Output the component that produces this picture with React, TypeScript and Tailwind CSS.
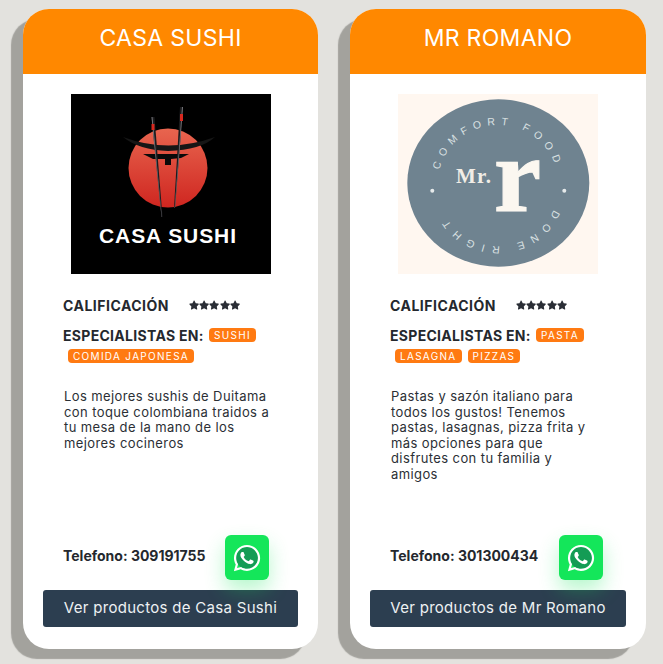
import { FaStar, FaWhatsapp } from 'react-icons/fa';

const restaurantes = [
  {
    nombre: 'CASA SUSHI',
    boton: 'Ver productos de Casa Sushi',
    telefono: '309191755',
    descripcion: 'Los mejores sushis de Duitama con toque colombiana traidos a tu mesa de la mano de los mejores cocineros',
    tags: ['SUSHI', 'COMIDA JAPONESA'],
    logo: 'sushi',
    ancho: 'w-[295px]',
    telAncho: 'w-[142px]',
  },
  {
    nombre: 'MR ROMANO',
    boton: 'Ver productos de Mr Romano',
    telefono: '301300434',
    descripcion: 'Pastas y sazón italiano para todos los gustos! Tenemos pastas, lasagnas, pizza frita y más opciones para que disfrutes con tu familia y amigos',
    tags: ['PASTA', 'LASAGNA', 'PIZZAS'],
    logo: 'romano',
    ancho: 'w-[296px]',
    telAncho: 'w-[149px]',
  },
];

const LogoSushi = () => (
  <svg viewBox="0 0 200 180" className="block w-[200px] h-[180px]">
    <defs>
      <linearGradient id="sol" x1="0" y1="0" x2="0" y2="1">
        <stop offset="0" stopColor="#e8654f" />
        <stop offset="1" stopColor="#cf2620" />
      </linearGradient>
    </defs>
    <rect width="200" height="180" fill="#000" />
    <circle cx="97" cy="74" r="39.5" fill="url(#sol)" />
    <path d="M52 43 Q97 60 144 43 Q130 56 97 57 Q68 56 52 43Z" fill="#161616" />
    <path d="M72 60 L118 60 L110 64 L100 65 L100 71 L94 71 L94 65 L82 65Z" fill="#0a0a0a" />
    <path d="M80.5 23 L83.5 23 L91.5 123 L90.5 123Z" fill="#1c1c1e" />
    <path d="M109 13 L112 13 L104 114 L103 114Z" fill="#1c1c1e" />
    <path d="M80.5 23 L81.5 23 L90.8 123 L90.5 123Z" fill="#77777c" />
    <path d="M111 13 L112 13 L104 114 L103.7 114Z" fill="#77777c" />
    <rect x="80.5" y="30" width="3" height="6" fill="#d8281f" />
    <rect x="109" y="20" width="3" height="7" fill="#d8281f" />
    <text x="28" y="149" textLength="137" lengthAdjust="spacing" fill="#fff" fontFamily="'Liberation Sans', sans-serif" fontWeight="700" fontSize="21">CASA SUSHI</text>
  </svg>
);

const LogoRomano = () => (
  <svg viewBox="0 0 200 180" className="block w-[200px] h-[180px]">
    <defs>
      <path id="arcoArriba" d="M40 89 A60 58 0 0 1 160 89" />
      <path id="arcoAbajo" d="M160 94 A60 58 0 0 1 40 94" />
    </defs>
    <rect width="200" height="180" fill="#fff7f0" />
    <ellipse cx="100.3" cy="89" rx="91" ry="83.7" fill="#6f8390" />
    <text fill="#d9e0e2" fontFamily="'Liberation Sans', sans-serif" fontSize="10.5" letterSpacing="6">
      <textPath href="#arcoArriba" startOffset="7%">COMFORT FOOD</textPath>
    </text>
    <text fill="#d9e0e2" fontFamily="'Liberation Sans', sans-serif" fontSize="10.5" letterSpacing="7">
      <textPath href="#arcoAbajo" startOffset="12%">DONE RIGHT</textPath>
    </text>
    <circle cx="34.3" cy="96.7" r="2" fill="#e6eaeb" />
    <circle cx="166.3" cy="96.7" r="2" fill="#e6eaeb" />
    <text x="58" y="88.5" fill="#f1ede6" fontFamily="'Liberation Serif', serif" fontWeight="700" fontSize="21" textLength="35">Mr.</text>
    <text x="96" y="116.5" fill="#fbf7f0" stroke="#fbf7f0" strokeWidth="1.2" fontFamily="'Liberation Serif', serif" fontWeight="700" fontSize="106">r</text>
  </svg>
);

const App: React.FC = () => {
  return (
    <div className="h-[664px] w-[663px] overflow-hidden bg-[#e3e2de] font-['Inter',sans-serif] pt-[9px] pl-[23px] flex gap-8">
      {restaurantes.map((r) => (
        <div
          key={r.nombre}
          className={`${r.ancho} h-[640px] bg-white rounded-[26px] overflow-hidden flex flex-col shadow-[-12px_10px_1px_#a3a29d]`}
        >
          <div className="h-[65px] bg-[#ff8800] text-white text-[23px] tracking-[0.3px] text-center pt-[14px] leading-[30px]">
            {r.nombre}
          </div>
          <div className="mt-5 flex justify-center">
            {r.logo === 'sushi' ? <LogoSushi /> : <LogoRomano />}
          </div>
          <div className="mt-5 pl-10 flex items-center h-[23px] text-[14px] tracking-[0.5px] font-bold text-[#24282e]">
            <span className="w-[126px]">CALIFICACIÓN</span>
            <span className="flex text-[#2a2e36]">
              {[1, 2, 3, 4, 5].map((n) => (
                <FaStar key={n} className="w-[10.2px] h-[10.2px]" />
              ))}
            </span>
          </div>
          <div className="mt-[11px] pl-10 flex flex-wrap items-start w-[280px] gap-y-[6px]">
            <span className="pt-px text-[14px] leading-[14px] tracking-[0.3px] font-bold text-[#24282e] w-[141px] whitespace-nowrap">ESPECIALISTAS EN:</span>
            {r.tags.map((t) => (
              <span
                key={t}
                className="ml-[5px] mr-px h-[14px] px-[5px] rounded bg-[#ff7a12] text-white text-[10px] leading-[14px] tracking-[1.3px] whitespace-nowrap"
              >
                {t}
              </span>
            ))}
          </div>
          <p className="mt-[26px] ml-[41px] w-[210px] text-[13px] leading-[15.6px] tracking-[0.4px] text-[#2b2f35]">
            {r.descripcion}
          </p>
          <div className="mt-auto pl-10 flex items-center gap-5">
            <span className={`${r.telAncho} pb-[5px] text-[14px] font-bold text-[#24282e] whitespace-nowrap`}>
              Telefono: {r.telefono}
            </span>
            <div className="relative z-10 w-11 h-[45px] rounded-md bg-[#14e65a] flex items-center justify-center shadow-[0_10px_20px_rgba(20,230,90,0.3)]">
              <span className="absolute w-[22px] h-[22px] rounded-full bg-[#149c55]" />
              <FaWhatsapp className="relative w-[30px] h-[30px] text-white" />
            </div>
          </div>
          <div className="mt-[10px] mb-[22px] mx-5 h-[37px] rounded-[3px] bg-[#2c3e50] text-[#eef1f3] text-[15px] tracking-[0.3px] flex items-center justify-center">
            {r.boton}
          </div>
        </div>
      ))}
    </div>
  );
};

export default App;
